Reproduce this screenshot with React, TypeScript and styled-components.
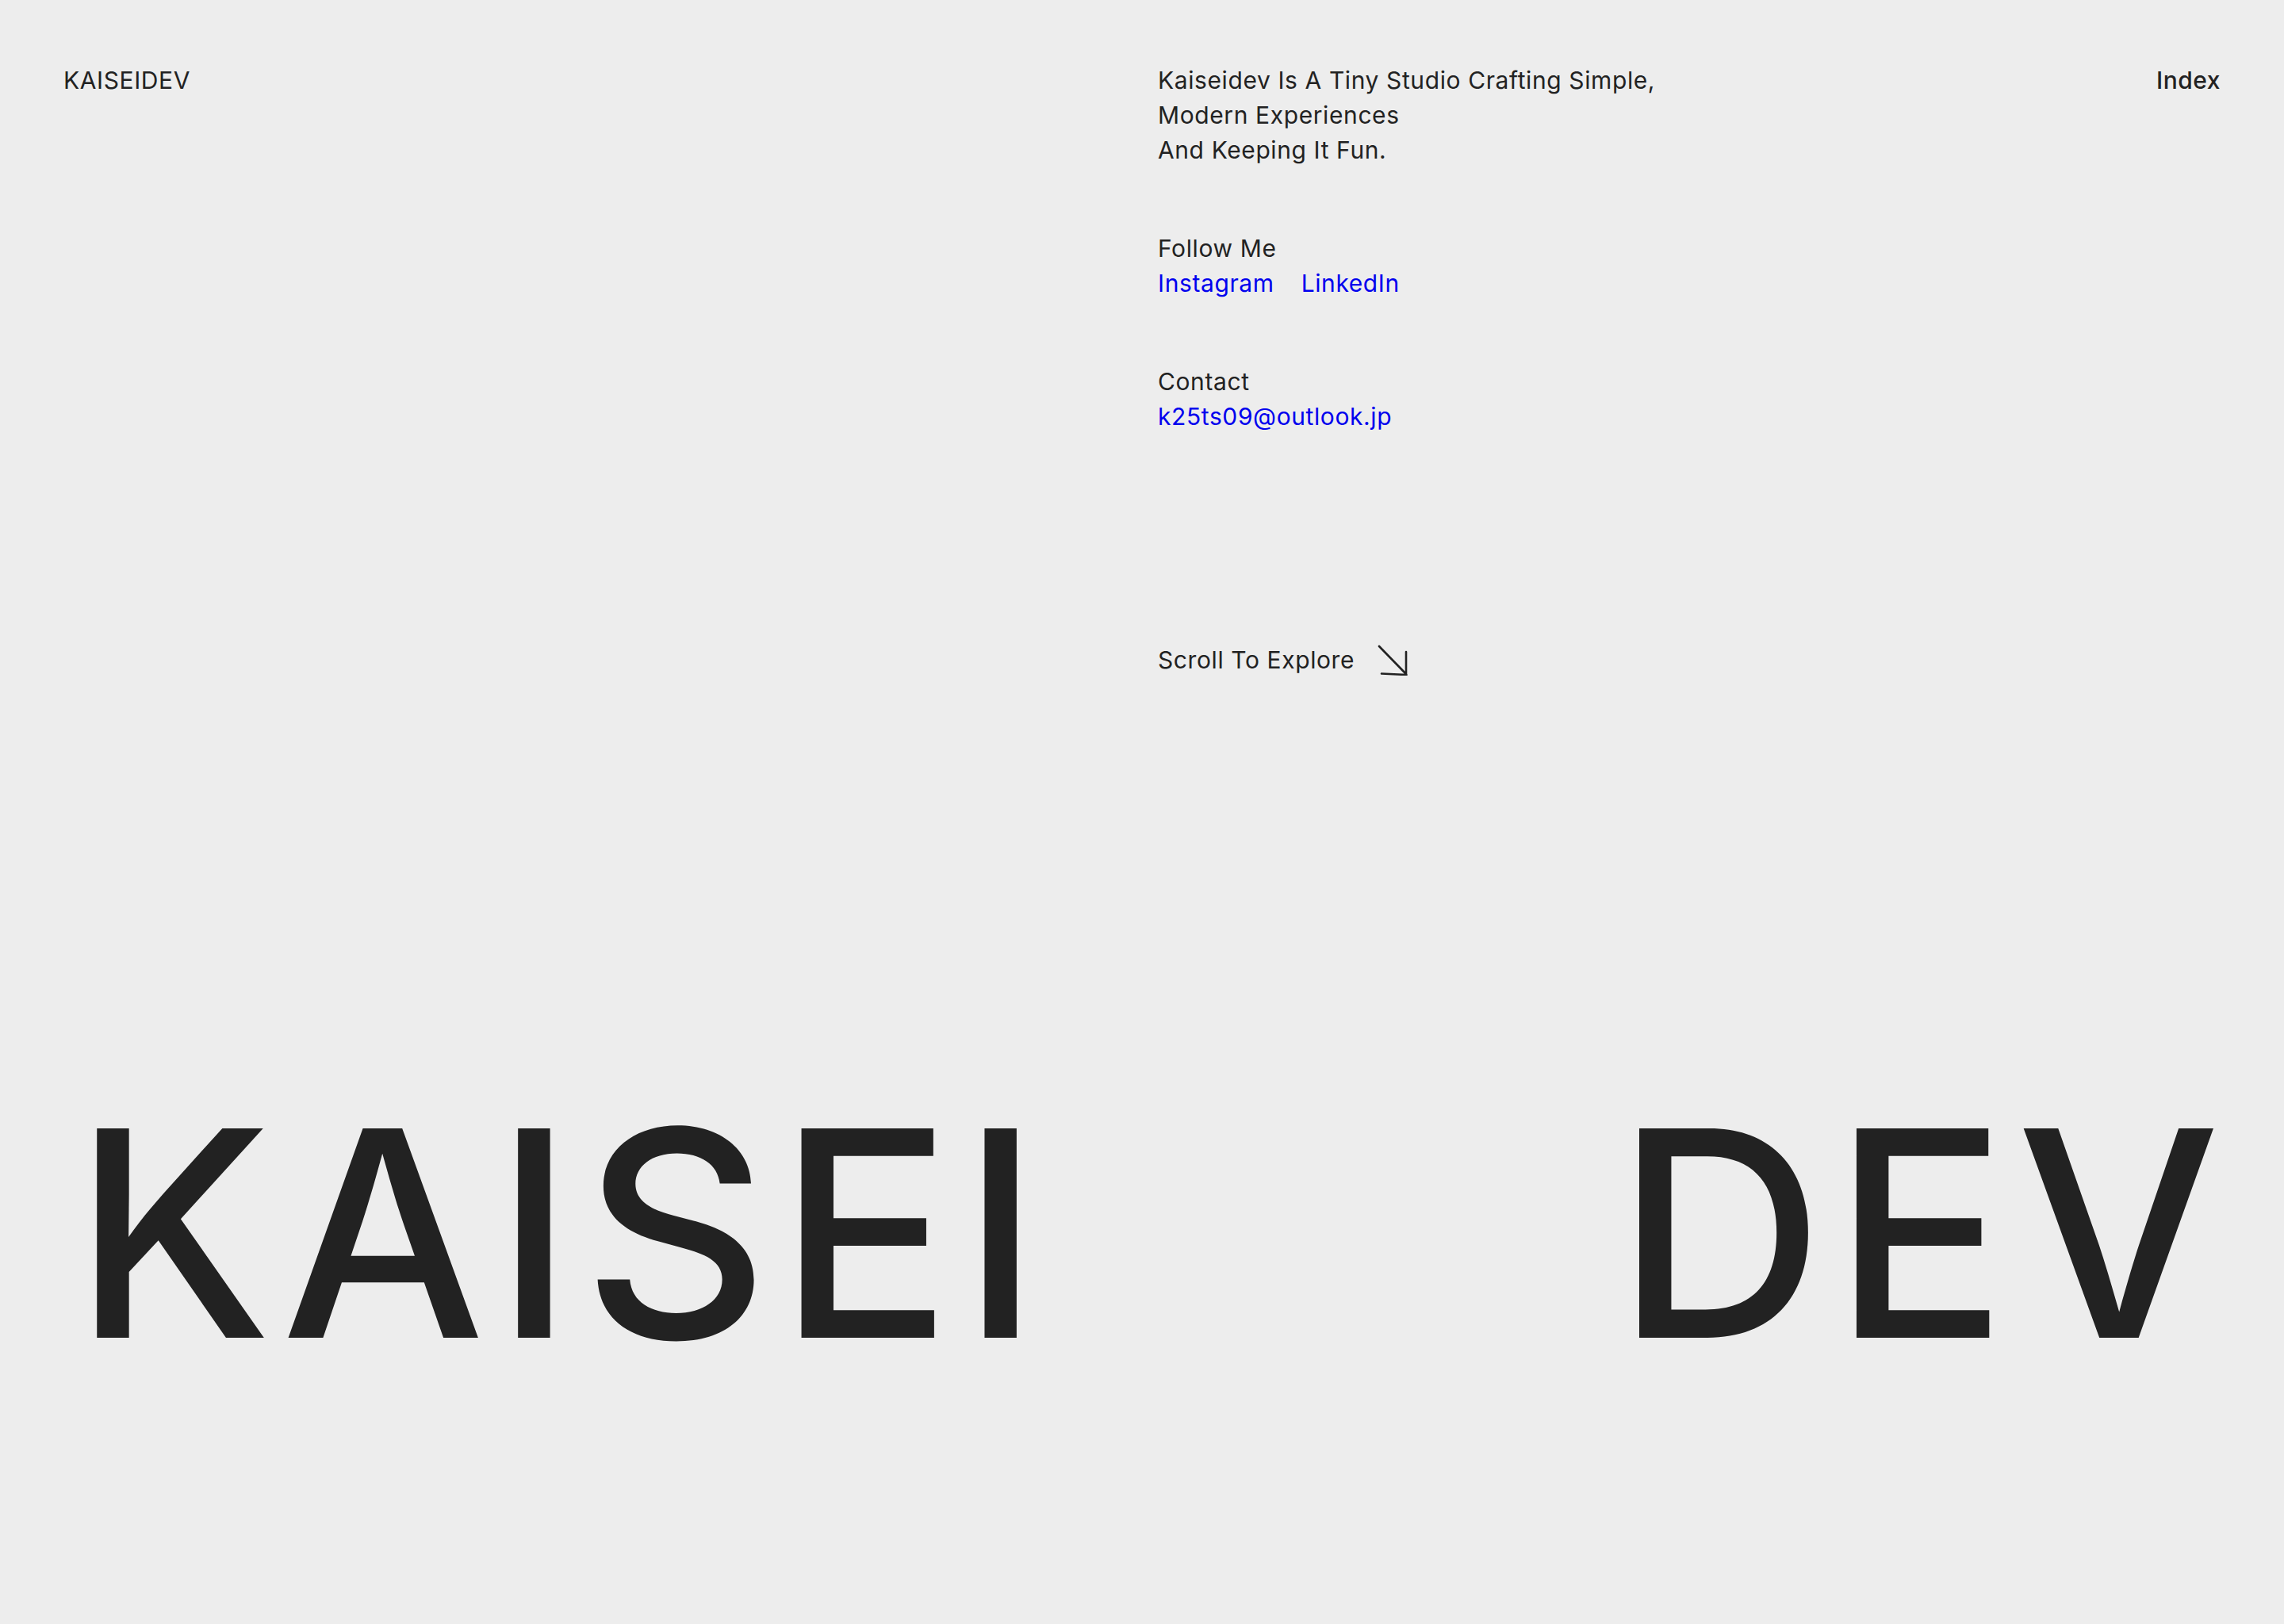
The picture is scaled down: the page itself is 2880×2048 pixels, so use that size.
import styled, { createGlobalStyle } from "styled-components";

const GlobalStyle = createGlobalStyle`
  html, body {
    margin: 0;
    padding: 0;
    background: #ededed;
  }
  body {
    font-family: Inter, "Noto Sans", "Liberation Sans", sans-serif;
    color: #222222;
    -webkit-font-smoothing: antialiased;
  }
`;

const Page = styled.main`
  min-height: 100vh;
  box-sizing: border-box;
  padding: 79px 80px 0;
  display: flex;
  flex-direction: column;
`;

const Header = styled.header`
  display: grid;
  grid-template-columns: 1fr 1fr;
  column-gap: 40px;
  align-items: start;
`;

const Logo = styled.a`
  font-size: 30px;
  line-height: 44px;
  font-weight: 400;
  color: #222222;
  text-decoration: none;
  letter-spacing: 0.6px;
`;

const RightSide = styled.div`
  display: flex;
  justify-content: space-between;
  align-items: flex-start;
`;

const Info = styled.div`
  display: flex;
  flex-direction: column;
  gap: 80px;
`;

const Block = styled.div`
  font-size: 30px;
  line-height: 44px;
  letter-spacing: 0.6px;
  color: #222222;
`;

const Links = styled.div`
  display: flex;
  gap: 34px;
`;

const Link = styled.a`
  color: #0000ee;
  text-decoration: none;
`;

const NavLink = styled.a`
  font-size: 30px;
  line-height: 44px;
  font-weight: 500;
  letter-spacing: 0.5px;
  color: #222222;
  text-decoration: none;
`;

const Scroll = styled.div`
  display: flex;
  align-items: center;
  gap: 28px;
  margin-top: 263px;
  font-size: 30px;
  line-height: 44px;
  letter-spacing: 0.6px;
`;

const Arrow = () => (
  <svg width="40" height="40" viewBox="0 0 40 40" fill="none">
    <path
      d="M3 3 L36 37 M37 10 L37 39 M6 37.5 L37.5 39"
      stroke="#222222"
      strokeWidth="2.6"
      strokeLinecap="round"
      strokeLinejoin="round"
    />
  </svg>
);

const Title = styled.h1`
  margin: 520px 0 0;
  display: flex;
  justify-content: space-between;
  font-size: 363px;
  line-height: 1;
  font-weight: 500;
  letter-spacing: 12px;
  color: #222222;
`;

const Word = styled.span<{ $inset?: number }>`
  margin-right: -12px;
  padding-left: ${(p) => p.$inset ?? 0}px;
`;

export default function App() {
  return (
    <>
      <GlobalStyle />
      <Page>
        <Header>
          <Logo href="#">KAISEIDEV</Logo>
          <RightSide>
            <div>
              <Info>
                <Block>
                  Kaiseidev Is A Tiny Studio Crafting Simple,
                  <br />
                  Modern Experiences
                  <br />
                  And Keeping It Fun.
                </Block>
                <Block>
                  Follow Me
                  <Links>
                    <Link href="#">Instagram</Link>
                    <Link href="#">LinkedIn</Link>
                  </Links>
                </Block>
                <Block>
                  Contact
                  <br />
                  <Link href="#">k25ts09@outlook.jp</Link>
                </Block>
              </Info>
              <Scroll>
                Scroll To Explore
                <Arrow />
              </Scroll>
            </div>
            <NavLink href="#">Index</NavLink>
          </RightSide>
        </Header>
        <Title>
          <Word $inset={13}>KAISEI</Word>
          <Word>DEV</Word>
        </Title>
      </Page>
    </>
  );
}
